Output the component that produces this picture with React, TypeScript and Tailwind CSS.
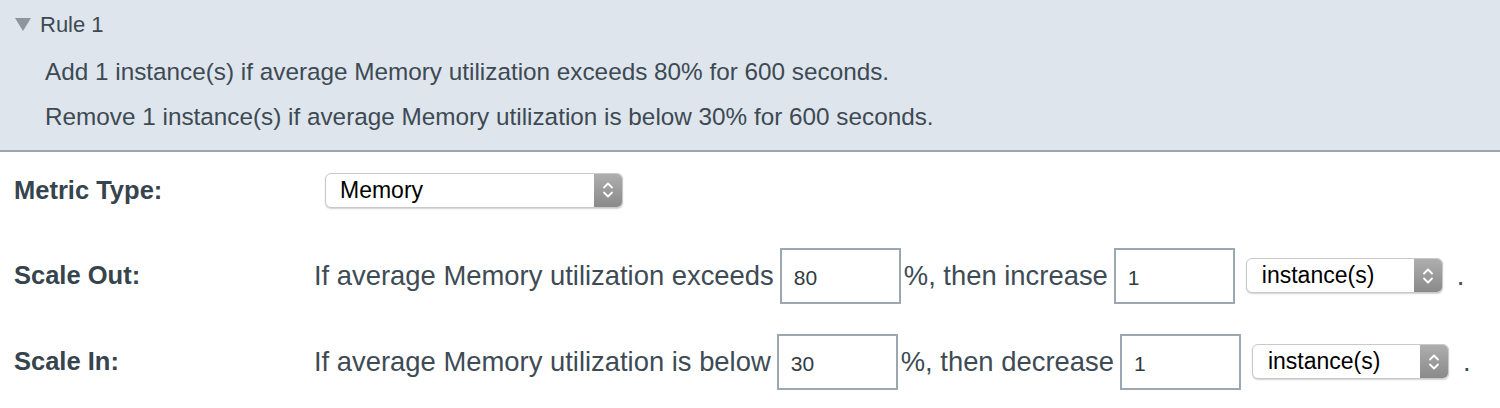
import React from "react";

const font = { fontFamily: '"Liberation Sans", Arial, Helvetica, sans-serif' };

function Chevrons() {
  return (
    <svg width="12" height="20" viewBox="0 0 12 20" fill="none">
      <path d="M2 7.5 L6 3.5 L10 7.5" stroke="white" strokeWidth="1.8" strokeLinecap="round" strokeLinejoin="round" />
      <path d="M2 12.5 L6 16.5 L10 12.5" stroke="white" strokeWidth="1.8" strokeLinecap="round" strokeLinejoin="round" />
    </svg>
  );
}

function MacSelect({ value, className }: { value: string; className: string }) {
  return (
    <div
      className={`flex h-[35px] items-stretch overflow-hidden rounded-[6px] border border-[#c9c9c9] bg-white shadow-[0_1px_1.5px_rgba(0,0,0,0.18)] ${className}`}
    >
      <div className="flex flex-1 items-center text-[23px] text-black">{value}</div>
      <div className="flex w-[28px] items-center justify-center bg-gradient-to-b from-[#aeaeae] to-[#8a8a8a]">
        <Chevrons />
      </div>
    </div>
  );
}

function Box({ value, className }: { value: string; className: string }) {
  return (
    <div
      className={`flex h-[56px] w-[121px] items-center border-2 border-[#9ba8b2] bg-white pl-[12px] pt-[4px] text-[21px] text-[#333b40] ${className}`}
    >
      {value}
    </div>
  );
}

export default function App() {
  return (
    <div className="w-[1500px] h-[408px] bg-white overflow-hidden" style={font}>
      {/* Header */}
      <div className="bg-[#dfe5ec] border-b-2 border-[#9ba6ae] h-[152px]">
        <div className="flex h-[48px] items-center">
          <svg className="ml-[15px] mt-[1px]" width="16" height="14" viewBox="0 0 16 14">
            <polygon points="0,0 16,0 8,13" fill="#8b969e" />
          </svg>
          <span className="ml-[9px] text-[22px] text-[#3d4a53]">Rule 1</span>
        </div>
        <div className="mt-[2px] flex h-[45px] items-center pl-[45px] text-[24.3px] text-[#3d4a53]">
          Add 1 instance(s) if average Memory utilization exceeds 80% for 600 seconds.
        </div>
        <div className="flex h-[45px] items-center pl-[45px] text-[24.3px] text-[#3d4a53]">
          Remove 1 instance(s) if average Memory utilization is below 30% for 600 seconds.
        </div>
      </div>

      {/* Form */}
      <div className="pl-[14px]">
        <div className="mt-[21px] flex h-[34px] items-center">
          <div className="w-[300px] text-[25.5px] font-bold text-[#36444e]">Metric Type:</div>
          <MacSelect value="Memory" className="ml-[11px] w-[298px] pl-[14px]" />
        </div>

        <div className="mt-[41px] flex h-[55px] items-center">
          <div className="w-[300px] text-[25.5px] font-bold text-[#36444e]">Scale Out:</div>
          <span className="text-[27.4px] text-[#3e4b55]">If average Memory utilization exceeds</span>
          <Box value="80" className="ml-[6px]" />
          <span className="ml-[3px] text-[27.4px] text-[#3e4b55]">%, then increase</span>
          <Box value="1" className="ml-[6px]" />
          <MacSelect value="instance(s)" className="ml-[11px] w-[197px] pl-[15px]" />
          <span className="ml-[14px] text-[27.4px] text-[#3e4b55]">.</span>
        </div>

        <div className="mt-[31px] flex h-[55px] items-center">
          <div className="w-[300px] text-[25.5px] font-bold text-[#36444e]">Scale In:</div>
          <span className="text-[27.4px] text-[#3e4b55]">If average Memory utilization is below</span>
          <Box value="30" className="ml-[6px]" />
          <span className="ml-[3px] text-[27.4px] text-[#3e4b55]">%, then decrease</span>
          <Box value="1" className="ml-[6px]" />
          <MacSelect value="instance(s)" className="ml-[11px] w-[197px] pl-[15px]" />
          <span className="ml-[14px] text-[27.4px] text-[#3e4b55]">.</span>
        </div>
      </div>
    </div>
  );
}
